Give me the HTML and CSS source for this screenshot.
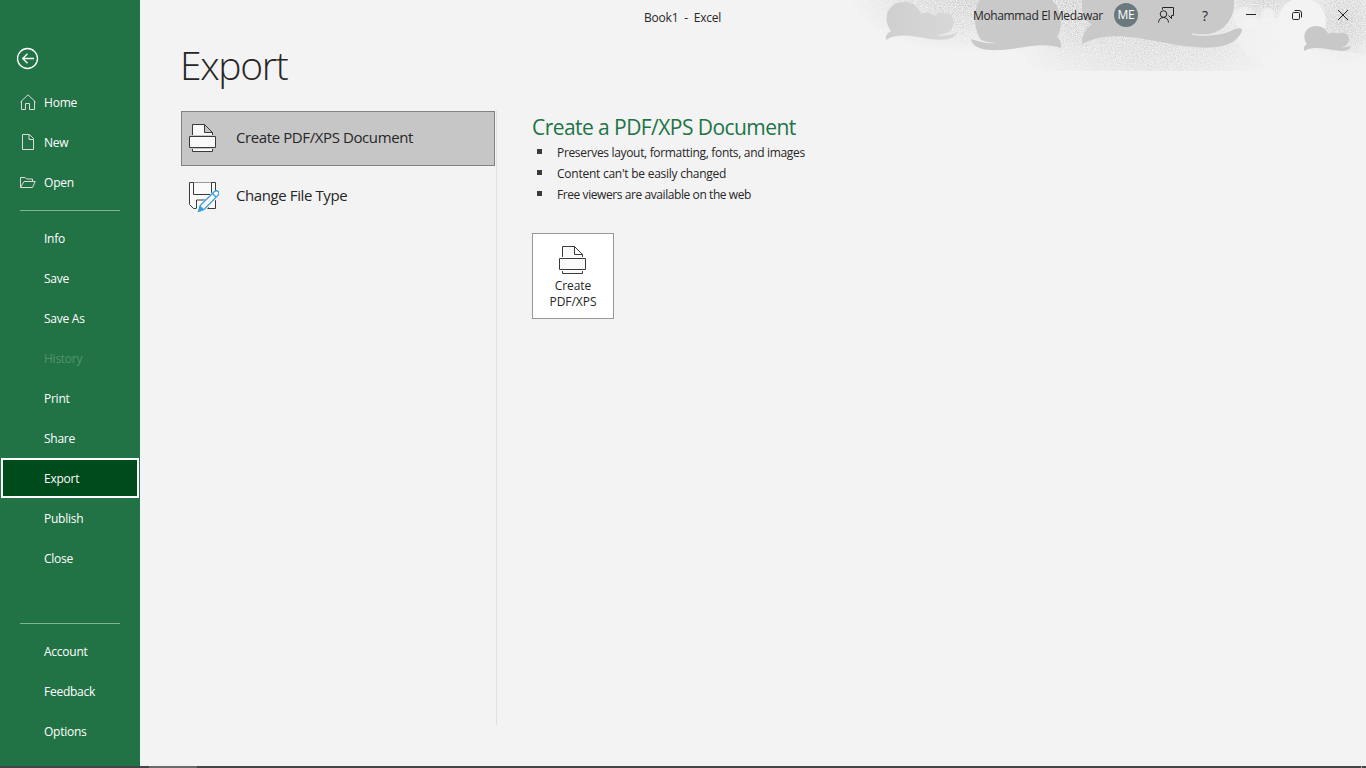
FILE: index.html
```html
<!DOCTYPE html>
<html lang="en">
<head>
<meta charset="utf-8">
<title>Book1 - Excel</title>
<link rel="stylesheet" href="styles.css">
</head>
<body>
<div class="app">
  <nav class="sidebar">
    <a class="back"><svg width="22" height="22" viewBox="0 0 22 22"><circle cx="10.500" cy="11.500" r="10"/><path d="M17 11.500H6M10.500 6.700L5.700 11.500l4.800 4.800"/></svg></a>
    <a class="item"><svg width="16" height="16" viewBox="0 0 16 16"><path d="M.5 8L8 .8 15.500 8M1.500 7v8.500h4v-6h4v6h5V7"/></svg><span>Home</span></a>
    <a class="item"><svg width="16" height="16" viewBox="0 0 16 16"><path d="M2.500.5h7l4 4v11h-11zM9 .5v5h4.500"/></svg><span>New</span></a>
    <a class="item"><svg class="folder" width="16" height="16" viewBox="0 0 16 16"><path d="M.5 12.500v-10H5l1.500 1.500h6v2.500M.5 12.500l3.500-6h11.200l-2.700 6z"/></svg><span>Open</span></a>
    <hr class="rule first">
    <a class="item">Info</a>
    <a class="item">Save</a>
    <a class="item">Save As</a>
    <a class="item disabled">History</a>
    <a class="item">Print</a>
    <a class="item">Share</a>
    <a class="item selected">Export</a>
    <a class="item">Publish</a>
    <a class="item">Close</a>
    <hr class="rule second">
    <a class="item">Account</a>
    <a class="item">Feedback</a>
    <a class="item">Options</a>
  </nav>
  <div class="main">
    <svg class="art" width="516" height="71" viewBox="850 0 516 71">
      <defs>
        <filter id="grain" x="0" y="0" width="1" height="1" color-interpolation-filters="sRGB">
          <feTurbulence type="fractalNoise" baseFrequency=".9" numOctaves="3" seed="4" result="n"/>
          <feColorMatrix in="n" type="matrix" values="0 0 0 0 0  0 0 0 0 0  0 0 0 0 0  2 0 0 0 -.5" result="m"/>
          <feComposite in="SourceGraphic" in2="m" operator="in"/>
        </filter>
        <radialGradient id="g"><stop offset="0" stop-color="#c4c4c4"/><stop offset=".55" stop-color="#c8c8c8" stop-opacity=".6"/><stop offset="1" stop-color="#ccc" stop-opacity="0"/></radialGradient>
        <linearGradient id="c1" x2="1"><stop stop-color="#cfcfcf"/><stop offset="1" stop-color="#d8d8d8"/></linearGradient>
      </defs>
      <g filter="url(#grain)" fill="url(#g)">
        <rect x="850" y="0" width="516" height="71" fill="none"/>
        <ellipse cx="970" cy="-4" rx="120" ry="56"/>
        <ellipse cx="1072" cy="5" rx="60" ry="50"/>
        <ellipse cx="1150" cy="38" rx="140" ry="60" opacity=".75"/>
        <ellipse cx="1265" cy="-3" rx="55" ry="28"/>
        <ellipse cx="1344" cy="20" rx="45" ry="50"/>
      </g>
      <g fill="#f3f3f3">
        <circle cx="1302" cy="22" r="24"/><circle cx="1268" cy="15" r="7" opacity=".7"/><circle cx="1245" cy="18" r="11" opacity=".65"/>
        <path d="M1245 18H1302V51C1326 49 1348 51 1366 55V71H1280Q1250 60 1236 42Z" opacity=".6"/>
      </g>
      <path fill="url(#c1)" d="M886 40Q885 34 891 31C881 17 889 2 904 2C914 2 919 8 921 14Q929 10 934 16Q940 11 948 13C955 16 956 27 949 32Q943 35 936 35Q948 37 957 32C956 39 945 41 930 39C914 37 899 32 886 40Z"/>
      <path fill="#c9c9c9" d="M980 0C973 10 973 28 981 40Q988 43 996 43Q984 44 971 39C972 47 982 51 1000 50C1022 49 1041 41 1061 48Q1062 41 1057 37C1063 27 1062 9 1052 0Z"/>
      <path fill="#c9c9c9" d="M1082 0V10Q1083 20 1092 24Q1081 32 1082 44C1107 30 1140 38 1166 43C1192 48 1220 51 1234 41Q1242 35 1242 29Q1237 27 1231 31C1216 37 1202 36 1192 34C1216 38 1235 26 1234 0Z"/>
      <path stroke="#e8e8e8" stroke-width="1.500" stroke-dasharray="3 .5" d="M1192 34Q1208 37 1220 32"/>
      <path fill="#c8c8c8" d="M1304 51Q1303 46 1307 44C1301 36 1306 26 1316 26Q1325 26 1328 34Q1332 31 1337 34C1344 30 1352 36 1348 43Q1346 47 1340 47Q1346 48 1351 46C1349 53 1339 51 1328 49Q1311 46 1304 51Z"/>
    </svg>
    <header class="titlebar">
      <div class="doc">Book1&nbsp; -&nbsp; Excel</div>
      <div class="user">Mohammad El Medawar</div>
      <div class="avatar">ME</div>
      <svg class="share" width="18" height="18" viewBox="0 0 18 18"><path d="M5.500 3.500v-2h11v8h-2v3l-3-3"/><circle cx="6.500" cy="8" r="3.300"/><path d="M1.500 16.500c.2-3 2-5 5-5s4.800 2 5 5"/></svg>
      <div class="help">?</div>
      <svg class="min" width="10" height="10" viewBox="0 0 10 10"><path d="M0 4.500h10"/></svg>
      <svg class="restore" width="10" height="10" viewBox="0 0 10 10"><rect x=".5" y="2.500" width="7" height="7" rx="1.200"/><path d="M2.500.5H7a2.500 2.500 0 0 1 2.500 2.500v4.500"/></svg>
      <svg class="close" width="10" height="10" viewBox="0 0 10 10"><path d="M0 0l10 10M10 0L0 10"/></svg>
    </header>
    <h1>Export</h1>
    <div class="content">
      <section class="choices">
        <div class="choice active">
          <svg width="32" height="32" viewBox="0 0 32 32"><g class="ink"><path d="M5.500 13V2.500h12l8 8V13M17.500 2.500v8h8"/><path d="M2.500 14.500h26v11h-26z"/><path d="M5.500 27v2.500h20V27"/></g></svg>
          <span>Create PDF/XPS Document</span>
        </div>
        <div class="choice">
          <svg width="32" height="32" viewBox="0 0 32 32"><path class="ink" d="M2.500 2.500h26v26h-22l-4-4z"/><path class="ink" d="M6.500 2.500v12h18v-12M9.500 28v-8h12v8"/><path class="halo" d="M12 31.500L28 15"/><path class="pen" d="M11.500 31.500l1.700-6L27.500 11.500a2.500 2.500 0 0 1 3.600 3.600L17 29.500zM25.500 13.500l3.500 3.500"/><path class="tip" d="M11.500 31.500l1.700-6 4 4z"/></svg>
          <span>Change File Type</span>
        </div>
      </section>
      <section class="details">
        <h2>Create a PDF/XPS Document</h2>
        <ul>
          <li class="b1">Preserves layout, formatting, fonts, and images</li>
          <li class="b2">Content can't be easily changed</li>
          <li class="b3">Free viewers are available on the web</li>
        </ul>
        <button class="create">
          <svg width="32" height="32" viewBox="0 0 32 32"><g class="ink"><path d="M5.500 13V2.500h12l8 8V13M17.500 2.500v8h8"/><path d="M2.500 14.500h26v11h-26z"/><path d="M5.500 27v2.500h20V27"/></g></svg>
          <span>Create<br>PDF/XPS</span>
        </button>
      </section>
    </div>
  </div>
</div>
<footer class="edge"><i></i><b></b></footer>
</body>
</html>
```
FILE: styles.css
```css
* { box-sizing: border-box; }
body {
  margin: 0;
  width: 1366px;
  height: 768px;
  overflow: hidden;
  background: #f3f3f3;
  color: #262626;
  font: 12px/16px "Open Sans", "Noto Sans", sans-serif;
  letter-spacing: -0.25px;
}
svg { display: block; fill: none; flex: none; }
h1, h2, ul { margin: 0; padding: 0; }
.app { display: flex; height: 766px; }
.sidebar { width: 140px; background: #217346; color: #fff; padding-top: 47px; flex: none; }
.back { display: block; height: 36px; padding-left: 17px; }
.back svg { stroke: #fff; stroke-width: 1.3; overflow: visible; }
.item { display: flex; align-items: center; height: 40px; padding-left: 44px; }
.item svg { stroke: #e2d9dd; margin: -2px 8px 0 -24px; }
.item .folder { margin-top: -1px; }
.item span { letter-spacing: -0.2px; }
.disabled { color: #549270; }
.selected { position: relative; top: -1px; margin: 0 1px; padding: 2px 0 0 41px; border: 2px solid #fff; background: #004b1c; }
.rule { width: 100px; height: 1px; border: 0; background: #7fb394; }
.first { margin: 7px 20px 8px; }
.second { margin: 44px 20px 8px; }
.main { position: relative; flex: 1; }
.art { position: absolute; top: 0; right: 0; }
.titlebar { position: relative; height: 31px; display: flex; align-items: center; }
.doc { width: 78px; margin: 4px 0 0 504px; letter-spacing: -0.2px; white-space: nowrap; }
.user { width: 131px; margin-left: 251px; letter-spacing: -0.36px; white-space: nowrap; }
.avatar { width: 24px; height: 24px; margin: -1px 0 0 10px; border-radius: 50%; background: #69797e; color: #fff; line-height: 24px; text-align: center; }
.titlebar svg { stroke: #262626; margin-top: -1px; }
.titlebar .share { margin-left: 19px; }
.help { width: 12px; margin-left: 24px; font-size: 14px; text-align: center; }
.titlebar .min { margin-left: 35px; }
.titlebar .restore { margin-left: 36px; }
.titlebar .close { margin-left: 36px; }
h1 { margin: 6px 0 0 40px; height: 74px; font-size: 39px; font-weight: 300; line-height: 55px; letter-spacing: -1.3px; }
.content { display: flex; margin-left: 41px; height: 614px; }
.choices { width: 316px; border-right: 1px solid #e0e0e0; }
.choice { display: flex; align-items: center; width: 314px; height: 55px; margin-bottom: 3px; padding: 0 0 2px 5px; border: 1px solid transparent; font-size: 15px; }
.active { background: #c6c6c6; border-color: #828282; }
.choice span { margin: -2px 0 0 17px; letter-spacing: -0.4px; white-space: nowrap; }
.ink { stroke: #3b3a39; fill: #fafafa; }
.halo { stroke: #f3f3f3; stroke-width: 8; }
.pen { stroke: #379ddd; fill: #fafafa; stroke-width: 1.3; }
.tip { fill: #379ddd; }
.details { margin-left: 35px; }
h2 { height: 31px; color: #217346; font-size: 21px; font-weight: 400; line-height: 32px; letter-spacing: -0.56px; white-space: nowrap; }
ul { list-style: none; }
li { display: flex; align-items: center; height: 21px; white-space: nowrap; }
li::before { content: ""; width: 5px; height: 5px; margin: -3px 15px 0 5px; background: #3b3a39; }
.b1 { letter-spacing: -0.33px; }
.b2 { letter-spacing: -0.25px; }
.b3 { letter-spacing: -0.42px; }
.create { display: flex; flex-direction: column; align-items: center; width: 82px; height: 86px; margin-top: 28px; padding: 10px 0 0; border: 1px solid #979797; background: #fff; color: #262626; font: inherit; letter-spacing: -0.05px; }
.create svg { margin-bottom: 2px; }
.edge { display: flex; height: 2px; background: #444; }
.edge i { width: 48px; margin-left: 149px; background: #6b6b6b; }
.edge b { width: 1px; margin-left: 1164px; background: #aaa; }
```
